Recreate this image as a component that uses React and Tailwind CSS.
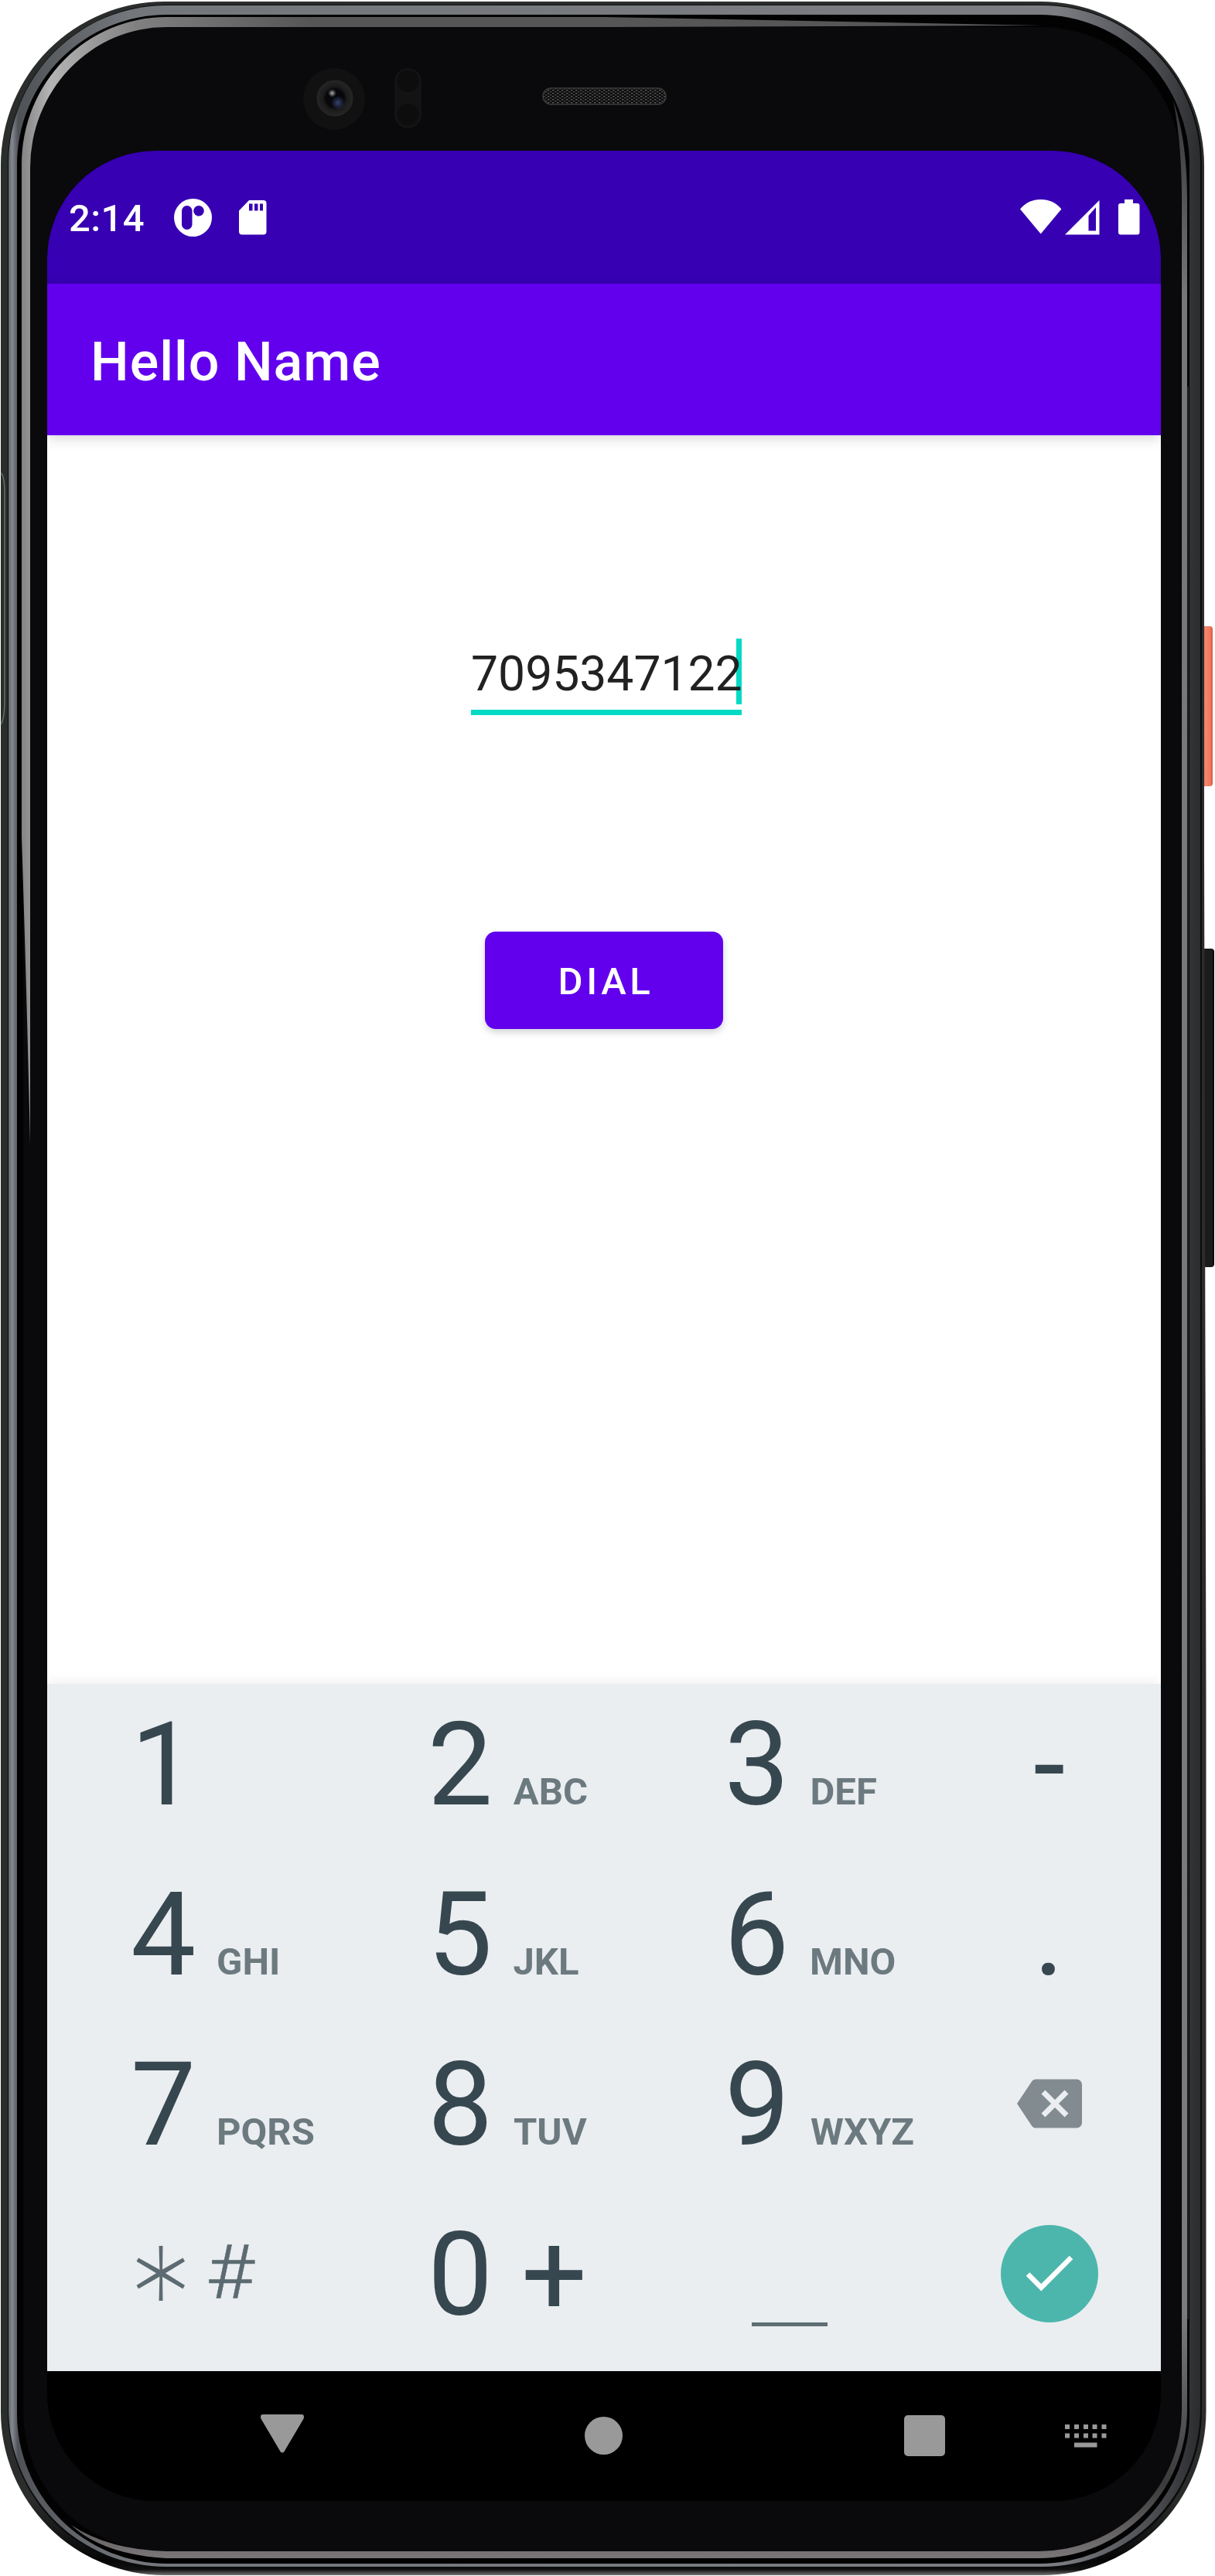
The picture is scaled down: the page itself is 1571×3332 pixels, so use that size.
import React from "react";

/* Device body: metal rim, bezel, camera, speaker and side buttons */
function DeviceFrame() {
  return (
    <svg className="absolute inset-0" width="1571" height="3332" viewBox="0 0 1571 3332" aria-hidden="true">
      <defs>
        <linearGradient id="rim" gradientUnits="userSpaceOnUse" x1="0" y1="0" x2="0" y2="3332">
          <stop offset="0" stopColor="#2b2d2c" />
          <stop offset="0.97" stopColor="#2b2c2c" />
          <stop offset="0.994" stopColor="#060606" />
          <stop offset="0.9975" stopColor="#111" />
          <stop offset="0.9995" stopColor="#6b6b6b" />
        </linearGradient>
        <linearGradient id="silver" gradientUnits="userSpaceOnUse" x1="11" y1="0" x2="1552" y2="0">
          <stop offset="0" stopColor="#60646a" />
          <stop offset="0.003" stopColor="#85888f" />
          <stop offset="0.008" stopColor="#4f5257" />
          <stop offset="0.1" stopColor="#73767b" />
          <stop offset="0.88" stopColor="#7b7d82" />
          <stop offset="0.96" stopColor="#4b4d51" />
          <stop offset="1" stopColor="#2a2c2e" />
        </linearGradient>
        <linearGradient id="glare" gradientUnits="userSpaceOnUse" x1="28" y1="0" x2="400" y2="0">
          <stop offset="0" stopColor="#858585" />
          <stop offset="0.1" stopColor="#b4b4b4" />
          <stop offset="0.4" stopColor="#808080" />
          <stop offset="1" stopColor="#565656" />
        </linearGradient>
        <linearGradient id="edge" gradientUnits="userSpaceOnUse" x1="0" y1="130" x2="0" y2="3309">
          <stop offset="0" stopColor="#333" />
          <stop offset="0.08" stopColor="#777" />
          <stop offset="0.9" stopColor="#7b7b7b" />
          <stop offset="0.97" stopColor="#3a3a3a" />
          <stop offset="1" stopColor="#7b7779" />
        </linearGradient>
        <linearGradient id="orange" x1="0" y1="0" x2="1" y2="0">
          <stop offset="0" stopColor="#d9583f" />
          <stop offset="0.5" stopColor="#f5866c" />
          <stop offset="0.8" stopColor="#f07a60" />
          <stop offset="1" stopColor="#d9583f" />
        </linearGradient>
        <radialGradient id="lens" cx="0.5" cy="0.5" r="0.5">
          <stop offset="0" stopColor="#06060a" />
          <stop offset="0.5" stopColor="#08080c" />
          <stop offset="0.65" stopColor="#1b1b1b" />
          <stop offset="1" stopColor="#262626" />
        </radialGradient>
        <radialGradient id="blue" cx="0.5" cy="0.5" r="0.5">
          <stop offset="0" stopColor="#34426f" />
          <stop offset="1" stopColor="#34426f" stopOpacity="0" />
        </radialGradient>
        <radialGradient id="glint" cx="0.5" cy="0.5" r="0.5">
          <stop offset="0" stopColor="#b5b5b5" />
          <stop offset="1" stopColor="#777" stopOpacity="0" />
        </radialGradient>
        <pattern id="mesh" width="6" height="4" patternUnits="userSpaceOnUse">
          <rect width="6" height="4" fill="#0c0c0c" />
          <rect x="0" y="0" width="2.4" height="1.5" fill="#5a5a5a" />
          <rect x="3" y="2" width="2.4" height="1.5" fill="#484848" />
        </pattern>
      </defs>

      <rect x="1550" y="810" width="18" height="207" rx="4" fill="url(#orange)" />
      <rect x="1550" y="1227" width="20" height="412" rx="4" fill="#1b1b1b" />
      <rect x="1568" y="1230" width="1.5" height="406" fill="#050505" />

      <path
        d="M213 2H1345A212 212 0 0 1 1557 214V1100L1559.500 2200V3119A212 212 0 0 1 1347 3331H213A212 212 0 0 1 1 3119V214A212 212 0 0 1 213 2Z"
        fill="url(#rim)"
      />
      <path d="M1 612Q6 614 6 640V905Q6 930 1 937" fill="none" stroke="#66706b" strokeWidth="1.5" />
      <rect x="10" y="6" width="1544" height="3317" rx="206" fill="#0a0b0b" />
      <rect x="11" y="7" width="1541" height="3313" rx="204" fill="url(#silver)" />
      <rect x="22" y="19" width="1516" height="3297" rx="194" fill="#020202" />
      <rect x="1535.500" y="500" width="1.5" height="2500" fill="#2b2b2b" />
      <rect x="30" y="35" width="1497" height="3265" rx="180" fill="#0a090b" />
      <path
        d="M28 1083V212A187 190 0 0 1 215 22H780L1347 33L780 35H215A176 182 0 0 0 39 217V1480Q35 1300 28 1083Z"
        fill="url(#glare)"
      />
      <path
        d="M1517 130Q1535 180 1535 260V3117A192 192 0 0 1 1343 3309H215Q132 3304 92 3266Q140 3298 215 3300H1343A185 183 0 0 0 1528 3117V260Q1528 185 1517 130Z"
        fill="url(#edge)"
      />

      {/* front camera */}
      <circle cx="432" cy="128" r="40" fill="#111111" />
      <circle cx="433" cy="127" r="23.500" fill="url(#lens)" />
      <circle cx="437" cy="133" r="9" fill="url(#blue)" />
      <circle cx="429.500" cy="120.500" r="5.500" fill="url(#glint)" />

      {/* proximity sensors */}
      <rect x="510" y="88" width="35" height="78" rx="17.500" fill="#131314" />
      <circle cx="527.500" cy="105" r="14" fill="#0d0d0e" />
      <circle cx="527.500" cy="148" r="14" fill="#0d0d0e" />

      {/* speaker */}
      <rect x="702" y="114" width="159" height="21" rx="10.500" fill="url(#mesh)" stroke="#3a3a3a" strokeWidth="1.500" />
    </svg>
  );
}

function StatusBar() {
  return (
    <div className="flex h-[172px] items-start justify-between bg-[#3700b3] pt-[62px] pr-[27px] pl-[28px] text-white">
      <div className="flex items-start">
        <span className="w-[136px] pt-[1px] text-[49px] leading-[49px] font-medium tracking-[0.4px]">2:14</span>
        <svg width="49" height="49" viewBox="0 0 49 49">
          <circle cx="24.500" cy="24.500" r="24.500" fill="#fff" />
          <rect x="10" y="9" width="13.500" height="31" rx="6.750" fill="#3700b3" />
          <circle cx="32" cy="15.800" r="6.800" fill="#3700b3" />
        </svg>
        <svg className="mt-[2px] ml-[35px]" width="36" height="45" viewBox="0 0 36 45">
          <path
            d="M13 0H31.500Q35.500 0 35.500 4V40.500Q35.500 44.500 31.500 44.500H4Q0 44.500 0 40.500V13.500ZM13 4.500V13.500H17.500V4.500ZM20 4.500V13.500H24.500V4.500ZM27 4.500V13.500H31V4.500Z"
            fill="#fff"
            fillRule="evenodd"
          />
        </svg>
      </div>
      <div className="flex items-start">
        <svg className="mt-[1px]" width="54" height="45" viewBox="0 0 54 45">
          <path d="M26.700 44.500L0 12.500C7 4 16 0 26.700 0S46.500 4 53.400 12.500Z" fill="#fff" />
        </svg>
        <svg className="mt-[2px] ml-[4px]" width="45" height="45" viewBox="0 0 45 45">
          <path d="M44.500 0V44.500H0ZM30.500 20V39.500H40V9Z" fill="#fff" fillRule="evenodd" />
        </svg>
        <svg className="mt-[1px] ml-[24px]" width="28" height="46" viewBox="0 0 28 46">
          <path
            d="M8 0H19V5H24.500Q27.500 5 27.500 8V42.500Q27.500 45.500 24.500 45.500H3Q0 45.500 0 42.500V8Q0 5 3 5H8Z"
            fill="#fff"
          />
        </svg>
      </div>
    </div>
  );
}

function NumberKey({ digit, letters }) {
  return (
    <div className="flex w-[384px] items-baseline pl-[108px]">
      <span className="w-[111px] text-[150px] leading-[224px] text-[#37474f]">{digit}</span>
      <span className="text-[49px] font-bold text-[#6c7a80]">{letters}</span>
    </div>
  );
}

function Keypad() {
  return (
    <div className="h-[889px] bg-[#eaeef1] shadow-[0_-4px_14px_rgba(0,0,0,0.06)]">
      <div className="-mt-[7px]">
        <div className="flex h-[220px]">
          <NumberKey digit="1" letters="" />
          <NumberKey digit="2" letters="ABC" />
          <NumberKey digit="3" letters="DEF" />
          <span className="w-[289px] text-center text-[150px] leading-[224px] text-[#37474f]">-</span>
        </div>
        <div className="flex h-[220px]">
          <NumberKey digit="4" letters="GHI" />
          <NumberKey digit="5" letters="JKL" />
          <NumberKey digit="6" letters="MNO" />
          <span className="w-[290px] text-center text-[150px] leading-[224px] text-[#37474f]">.</span>
        </div>
        <div className="flex h-[220px]">
          <NumberKey digit="7" letters="PQRS" />
          <NumberKey digit="8" letters="TUV" />
          <NumberKey digit="9" letters="WXYZ" />
          <div className="flex w-[288px] items-center justify-center">
            <svg width="84" height="84" viewBox="0 0 24 24" fill="#828c90">
              <path d="M22 3H7c-.69 0-1.230.350-1.590.880L0 12l5.410 8.110c.360.530.900.890 1.590.890h15c1.100 0 2-.900 2-2V5c0-1.100-.900-2-2-2zm-3 12.590L17.590 17 14 13.410 10.410 17 9 15.590 12.590 12 9 8.410 10.410 7 14 10.590 17.590 7 19 8.410 15.410 12 19 15.590z" />
            </svg>
          </div>
        </div>
        <div className="flex h-[220px]">
          <div className="flex w-[384px] items-start pl-[115px]">
            <svg className="mt-[74px]" width="64" height="71" viewBox="0 0 64 71" fill="#5c6b71">
              <path d="M29.500 0H34.500L34 35L34.500 71H29.500L30.500 35Z" />
              <path d="M3 15.500L0.500 20L30.500 38L60.500 55.500L63 51L33.500 32.500Z" />
              <path d="M63 20L60.500 15.500L30.500 32.500L0.500 51L3 55.500L33.500 38Z" />
            </svg>
            <span className="ml-[26px] origin-left scale-x-[1.11] text-[97px] leading-[217px] font-light text-[#5c6b71] [-webkit-text-stroke:0.6px_#5c6b71]">
              #
            </span>
          </div>
          <div className="flex w-[384px] items-baseline pl-[108px]">
            <span className="w-[121px] text-[150px] leading-[224px] text-[#37474f]">0</span>
            <span className="text-[150px] leading-[224px] text-[#37474f]">+</span>
          </div>
          <div className="flex w-[384px] items-start pt-[173px] pl-[143px]">
            <span className="h-[5px] w-[98px] bg-[#5f6e74]" />
          </div>
          <div className="flex w-[288px] items-center justify-center">
            <div className="flex h-[126px] w-[126px] items-center justify-center rounded-full bg-[#4db6ac]">
              <svg width="62" height="48" viewBox="0 0 62 48" fill="none" stroke="#fff" strokeWidth="6.500">
                <path d="M3 24.500L20.300 41.800L59 3" />
              </svg>
            </div>
          </div>
        </div>
      </div>
    </div>
  );
}

function NavigationBar() {
  const keys = [0, 12, 24, 35.5, 47.5];
  return (
    <div className="flex h-[168px] items-start bg-black pl-[276px] text-[#999]">
      <svg className="mt-[56px]" width="56" height="50" viewBox="0 0 56 50" fill="currentColor">
        <path d="M3 0H53Q56 0 56 3Q56 5 55 6.500L30.500 48Q28 51 25.500 48L1 6.500Q0 5 0 3Q0 0 3 0Z" />
      </svg>
      <span className="mt-[59px] ml-[363px] h-[49px] w-[49px] rounded-full bg-[#999]" />
      <span className="mt-[57px] ml-[364px] h-[53px] w-[53px] rounded-[5px] bg-[#999]" />
      <svg className="mt-[69px] ml-[155px]" width="54" height="30" viewBox="0 0 54 30" fill="currentColor">
        {keys.map((x) => (
          <g key={x}>
            <rect x={x} y="0" width="6" height="6" />
            <rect x={x} y="11.500" width="6" height="6" />
          </g>
        ))}
        <rect x="12" y="23.500" width="29.500" height="6" />
      </svg>
    </div>
  );
}

export default function App() {
  return (
    <div className="relative h-[3332px] w-[1571px] overflow-hidden bg-white pt-[195px] pl-[61px] font-['Roboto',sans-serif]">
      <DeviceFrame />
      <div className="relative flex h-[3040px] w-[1440px] flex-col overflow-hidden rounded-[140px] bg-black">
        <StatusBar />
        <div className="relative z-10 flex h-[196px] items-center bg-[#6200ee] pt-[6px] pl-[56px] shadow-[0_4px_16px_rgba(0,0,0,0.16)]">
          <h1 className="text-[70px] leading-none font-medium tracking-[1px] text-white">Hello Name</h1>
        </div>
        <main className="flex flex-1 flex-col items-start bg-white pt-[263px]">
          <div className="relative ml-[548px] h-[99px] w-[350px] border-b-[7px] border-[#03dac5]">
            <span className="absolute top-0 right-0 h-[85px] w-[7px] bg-[#03dac5]" />
            <span className="relative block text-[62.4px] leading-[91px] text-[#212121]">7095347122</span>
          </div>
          <button className="mt-[280px] ml-[566px] flex h-[126px] w-[308px] items-center justify-center rounded-[14px] bg-[#6200ee] pt-[3px] pl-[5px] text-[49px] leading-none font-medium tracking-[4.7px] text-white shadow-[0_4px_10px_rgba(0,0,0,0.18)]">
            DIAL
          </button>
        </main>
        <Keypad />
        <NavigationBar />
      </div>
    </div>
  );
}
